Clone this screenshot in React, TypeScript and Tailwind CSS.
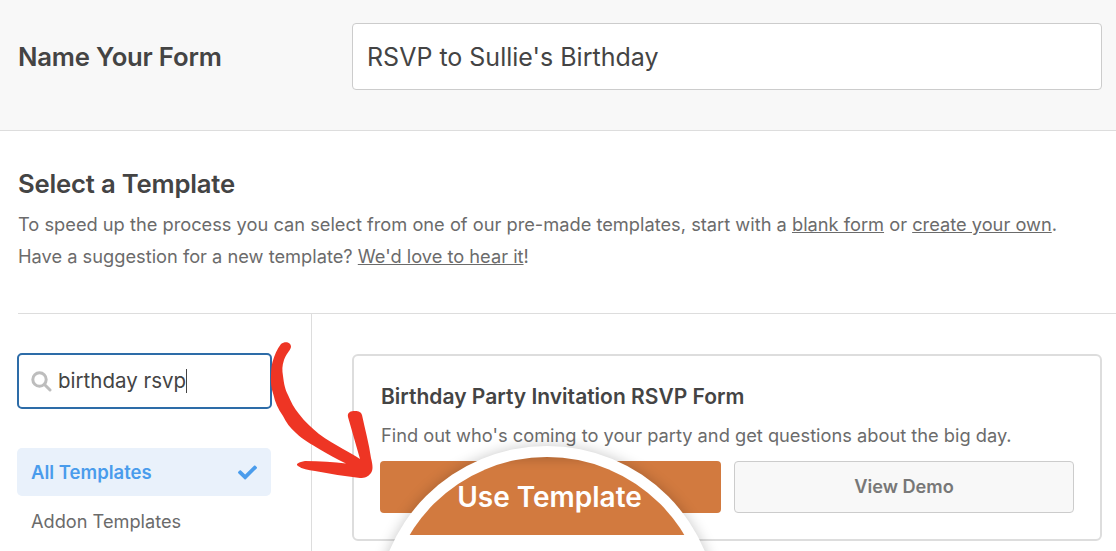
import React from 'react';
import { FaCheck } from 'react-icons/fa';

const font = { fontFamily: 'Inter, "Liberation Sans", sans-serif' };

const Magnifier: React.FC = () => (
  <div className="absolute left-[376px] top-[446px] h-[342px] w-[342px] rounded-full bg-white p-[11px] shadow-[0_0_14px_rgba(0,0,0,0.22)]">
    <div className="h-[320px] w-[320px] overflow-hidden rounded-full">
      <div className="flex h-[78px] items-start justify-center bg-[#d27a3f] pl-[5px] pt-[21px] text-[28px] leading-[38px] font-semibold text-white shadow-[inset_0_10px_12px_-8px_rgba(0,0,0,0.2)]">
        Use Template
      </div>
    </div>
  </div>
);

const Arrow: React.FC = () => (
  <svg className="absolute left-0 top-0" width="400" height="500" viewBox="0 0 400 500" fill="none">
    <path
      d="M281 344 C285 341 291 342 291 347 C290 351 286 354 284 360 C282 366 282 370 283 376 C284 384 285 389 288 395 C291 402 294 408 299 414 C305 422 312 428 319 434 C327 440 335 444 343 449 C349 452 355 456 360 459 L348 417 C347 412 351 411 355 411 C359 411 361 412 362 415 C365 429 369 444 371 458 C373 466 373 470 371 473 C368 477 365 478 360 478 C345 476 330 474 315 471 C308 470 302 469 298 466 C295 464 299 462 305 461 C320 461 334 462 346 463.5 C336 459 328 454 320 449.5 C311 444 303 440 296 433 C290 428 286 422 283 416 C278 409 275 402 273.5 395 C271 388 270.5 381 271 375 C271 370 271.5 366 272.5 362 C274.5 355 277 349 281 344 Z"
      fill="#ee3524"
    />
  </svg>
);

export default function App() {
  return (
    <div className="relative h-[551px] w-[1116px] overflow-hidden bg-white text-[#444]" style={font}>
      <div className="flex h-[131px] items-start border-b border-[#ddd] bg-[#f8f8f8] pl-[18px] pr-[14px] pt-[23px]">
        <div className="flex h-[67px] w-[334px] items-center pt-[1px] text-[25.7px] font-semibold tracking-[-0.2px]">Name Your Form</div>
        <div className="flex h-[67px] w-[750px] items-center rounded border border-[#ccc] bg-white pl-[14px] pt-[3px] text-[25px]">
          RSVP to Sullie's Birthday
        </div>
      </div>

      <div className="px-[18px] pt-[36px]">
        <h2 className="text-[25.7px] leading-[34px] font-semibold tracking-[-0.2px]">Select a Template</h2>
        <p className="mt-[7px] text-[18.25px] leading-[32px] text-[#6b6b6b]">
          To speed up the process you can select from one of our pre-made templates, start with a <u>blank form</u> or <u>create your own</u>.
          <br />
          Have a suggestion for a new template? <u>We'd love to hear it</u>!
        </p>
      </div>

      <div className="ml-[18px] mt-[41px] flex border-t border-[#ddd]">
        <aside className="h-[240px] w-[294px] border-r border-[#ddd] pt-[39px]">
          <div className="-ml-px flex h-[56px] w-[255px] items-center rounded-[5px] border-[2.5px] border-[#2d6ca8] pl-[12px] text-[20.5px]">
            <svg width="21" height="21" viewBox="0 0 21 21" fill="none" stroke="#bdbdbd" strokeWidth="3">
              <circle cx="8.5" cy="8.5" r="6.7" />
              <path d="M13.5 13.5 L19 19" strokeLinecap="round" />
            </svg>
            <span className="ml-[6px]">birthday rsvp</span>
            <span className="h-[24px] w-px bg-[#444]" />
          </div>
          <div className="-ml-px mt-[39px] flex h-[48px] w-[254px] items-center justify-between rounded-[5px] bg-[#e9f1fb] pl-[14px] pr-[14px] pt-[1px] text-[18.5px] font-semibold text-[#4a9cec]">
            All Templates
            <FaCheck className="text-[19px]" />
          </div>
          <div className="ml-[13px] mt-[12px] text-[18.2px] leading-[27px] text-[#6b6b6b]">Addon Templates</div>
        </aside>

        <main className="pl-[40px] pt-[40px]">
          <div className="h-[187px] w-[750px] rounded-[6px] border-2 border-[#ddd] pl-[26px] pt-[27px]">
            <h3 className="pl-px text-[21px] leading-[28px] font-semibold">Birthday Party Invitation RSVP Form</h3>
            <p className="mt-[10px] pl-px text-[18.25px] leading-[28px] text-[#6b6b6b]">
              Find out who's coming to your party and get questions about the big day.
            </p>
            <div className="mt-[12px] flex gap-[13px]">
              <button className="h-[52px] w-[341px] rounded bg-[#d27a3f]" />
              <button className="h-[52px] w-[340px] rounded border border-[#ccc] bg-[#f8f8f8] text-[18.2px] font-semibold text-[#777]">
                View Demo
              </button>
            </div>
          </div>
        </main>
      </div>

      <Arrow />
      <Magnifier />
    </div>
  );
}
